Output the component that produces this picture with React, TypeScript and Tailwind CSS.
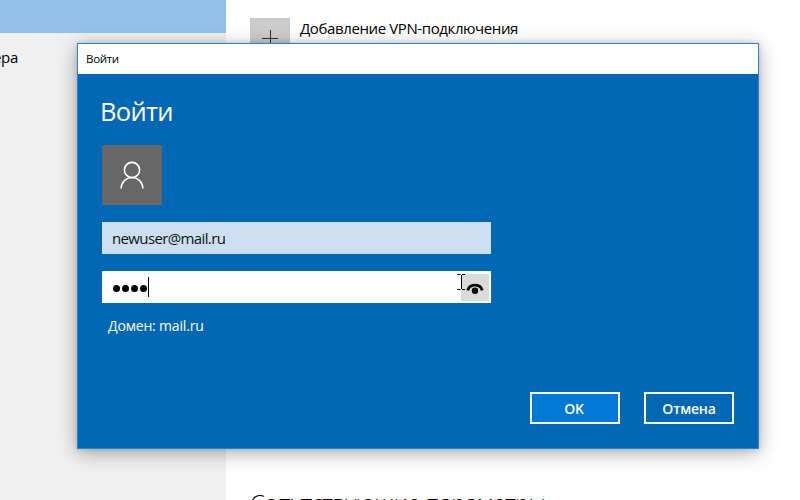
function PersonIcon() {
  return (
    <svg width="60" height="60" viewBox="0 0 60 60" fill="none" stroke="#fff" strokeWidth="1.6">
      <circle cx="30" cy="25" r="7.6" />
      <path d="M19.2 43.5v-1C20.5 29.2 39.5 29.2 40.8 42.5v1" />
    </svg>
  );
}

function RevealIcon() {
  return (
    <svg width="28" height="27" viewBox="0 0 28 27" fill="none">
      <path d="M6.8 16.4C8.5 9.3 19.5 9.3 21.2 16.4" stroke="#000" strokeWidth="2.9" />
      <circle cx="14" cy="16.8" r="3.2" fill="#000" />
    </svg>
  );
}

function TextCursor() {
  return (
    <svg className="absolute left-[355px] top-[3px]" width="9" height="17" viewBox="0 0 9 17" fill="none" stroke="#000">
      <path d="M0.5 0.5h3M5 0.5h3M0.5 15.5h3M5 15.5h3M4.5 1v14" />
    </svg>
  );
}

function SettingsPage() {
  return (
    <div className="flex h-[500px] w-[800px]">
      <aside className="w-[226px] shrink-0 bg-[#f0f0f0]">
        <div className="h-[33px] bg-[#91c1e9]" />
        <div className="ml-[-7px] mt-[14px] text-[15px] leading-5 tracking-[-0.3px]">ера</div>
      </aside>
      <main className="flex flex-1 flex-col pl-6 pt-[18px]">
        <div className="flex gap-[10px]">
          <div className="flex size-10 items-center justify-center bg-[#cccccc]">
            <svg width="16" height="16" viewBox="0 0 16 16" stroke="#333" fill="none">
              <path d="M0 8.5h16M8.5 0v16" />
            </svg>
          </div>
          <div className="mt-[-1px] whitespace-nowrap text-[15px] leading-[22px] tracking-[-0.39px]">Добавление VPN-подключения</div>
        </div>
        <h2 className="mt-[424px] h-[18px] overflow-hidden whitespace-nowrap text-[24px] font-light leading-[42px] tracking-[-0.7px]">
          Сопутствующие параметры
        </h2>
      </main>
    </div>
  );
}

function LoginDialog() {
  return (
    <section className="absolute left-[77px] top-[43px] flex h-[406px] w-[682px] flex-col border border-[#2a84d2] bg-[#0067b5] shadow-[0_4px_18px_rgba(0,0,0,0.32),0_0_5px_rgba(0,0,0,0.15)]">
      <header className="h-[30px] shrink-0 bg-white pl-2 text-[11.5px] leading-[30px] tracking-[-0.3px]">Войти</header>
      <div className="flex flex-1 flex-col pl-6 text-white">
        <h1 className="ml-[-2px] mt-[18px] h-[39px] w-fit text-[25.5px] leading-[39px] tracking-[-0.7px]">Войти</h1>
        <div className="mt-[14px] size-[60px] bg-[#676767]">
          <PersonIcon />
        </div>
        <div className="mt-[17px] h-8 w-[389px] bg-[#cce0f1] pl-[10px] text-[15px] leading-[32px] tracking-[-0.63px] text-[#111]">newuser@mail.ru</div>
        <div className="relative mt-[17px] flex h-8 w-[389px] items-center justify-between bg-white pl-[11px] pr-[2px]">
          <div className="flex items-center gap-[2px]">
            <i className="mt-[3px] size-[7px] rounded-full bg-black" />
            <i className="mt-[3px] size-[7px] rounded-full bg-black" />
            <i className="mt-[3px] size-[7px] rounded-full bg-black" />
            <i className="mt-[3px] size-[7px] rounded-full bg-black" />
            <i className="ml-[-1px] h-5 w-px bg-black" />
          </div>
          <div className="bg-[#dadada]">
            <RevealIcon />
          </div>
          <TextCursor />
        </div>
        <p className="ml-[6px] mt-3 h-[22px] w-fit text-[14px] leading-[22px] tracking-[-0.18px]">Домен: mail.ru</p>
        <footer className="mt-[55px] flex justify-end gap-6 pr-6 text-[14px] font-semibold">
          <button className="h-8 w-[90px] border-2 border-white bg-[#0078d7] pr-[2px] leading-[29px] tracking-[-0.3px]">OK</button>
          <button className="h-8 w-[90px] border-2 border-white leading-[29px] tracking-[-0.2px]">Отмена</button>
        </footer>
      </div>
    </section>
  );
}

export default function App() {
  return (
    <div className="relative h-[500px] w-[800px] overflow-hidden bg-white font-['Open_Sans','Noto_Sans',sans-serif] text-black">
      <SettingsPage />
      <LoginDialog />
    </div>
  );
}
